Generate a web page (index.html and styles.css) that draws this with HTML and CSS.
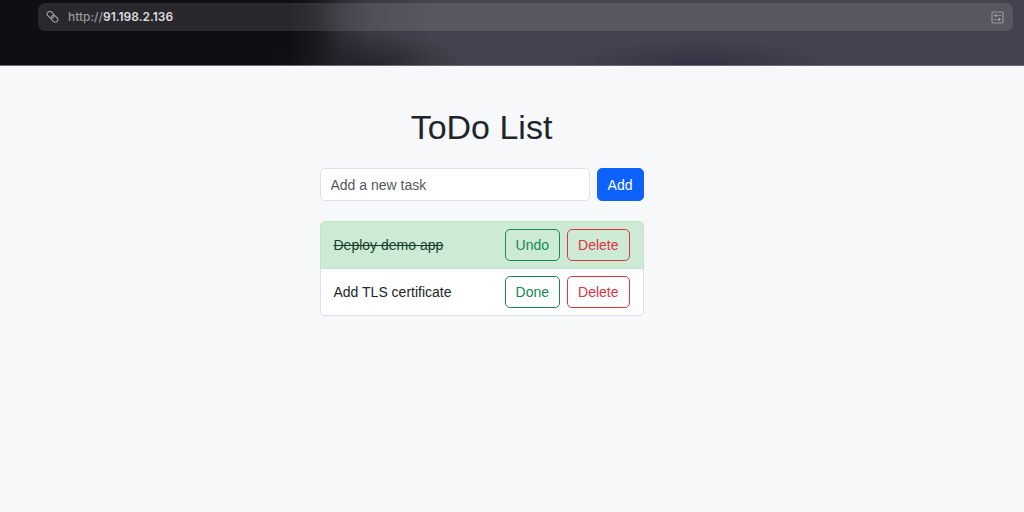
FILE: index.html
```
<!DOCTYPE html>
<html lang="en">
<head>
  <meta charset="UTF-8">
  <meta name="viewport" content="width=device-width, initial-scale=1.0">
  <title>ToDo List</title>
  <link rel="stylesheet" href="styles.css">
</head>
<body>
  <header class="browser-bar">
    <div class="address">
      <svg class="icon-link" viewBox="0 0 14 14" fill="none" stroke="currentColor" stroke-width="1.2">
        <rect x="-3.7" y="-2.6" width="7.4" height="5.2" rx="2.6" transform="translate(4.6 4.8) rotate(45)"/>
        <rect x="-3.7" y="-2.6" width="7.4" height="5.2" rx="2.6" transform="translate(8.4 8.8) rotate(45)"/>
      </svg>
      <span class="url">http://<strong>91.198.2.136</strong></span>
      <svg class="icon-page" viewBox="0 0 13 13" fill="none" stroke="currentColor">
        <rect x="1" y="1" width="11" height="11" rx="1.2" stroke-width="1.2"/>
        <path d="M3 4.5h3.5M7.5 4.5h2.5M3 8.5h2.5M6.5 8.5h3.5"/>
        <path d="M5 3v3M8.2 7v3" stroke-width="1.6"/>
      </svg>
    </div>
  </header>

  <main class="page">
    <div class="container">
      <h1>ToDo List</h1>
      <form class="task-form" onsubmit="return false">
        <input type="text" class="task-input" placeholder="Add a new task" aria-label="Add a new task">
        <button type="submit" class="btn btn-primary">Add</button>
      </form>
      <ul class="task-list">
        <li class="task completed">
          <span class="task-title">Deploy demo app</span>
          <button type="button" class="btn btn-success">Undo</button>
          <button type="button" class="btn btn-danger">Delete</button>
        </li>
        <li class="task">
          <span class="task-title">Add TLS certificate</span>
          <button type="button" class="btn btn-success">Done</button>
          <button type="button" class="btn btn-danger">Delete</button>
        </li>
      </ul>
    </div>
  </main>
</body>
</html>
```
FILE: styles.css
```
* {
  box-sizing: border-box;
}
body {
  margin: 0;
  background-color: #f7f8fa;
  color: #212529;
  font-family: "Liberation Sans", Arial, sans-serif;
  font-size: 14px;
  line-height: 20px;
}

/* Browser toolbar */
.browser-bar {
  height: 66px;
  padding: 3px 11px 0 38px;
  border-bottom: 1px solid #6b6a72;
  background:
    radial-gradient(ellipse 100px 32px at 365px 100%, rgba(28, 26, 34, 0.7), transparent),
    radial-gradient(ellipse 130px 26px at 700px 100%, rgba(46, 44, 62, 0.7), transparent),
    linear-gradient(90deg, #0f0e12 0, #0f0e12 290px, #1a191d 318px, #2d2b34 340px, #3b3944 370px, #44424e 430px, #44424e 100%);
}
.address {
  display: flex;
  align-items: center;
  height: 28px;
  padding: 0 9px 0 8px;
  border-radius: 7px;
  background-color: rgba(255, 255, 255, 0.11);
  color: #98979c;
}
.icon-link {
  width: 14px;
  height: 14px;
}
.url {
  flex: 1;
  margin-left: 8px;
  color: #98979c;
  font-family: Inter, sans-serif;
  font-size: 12px;
  font-weight: 500;
}
.url strong {
  color: #dddde0;
  font-weight: 600;
}
.icon-page {
  width: 13px;
  height: 13px;
}

/* Todo page */
.page {
  padding: 40px 61px 0 0;
}
.container {
  max-width: 324px;
  margin: 0 auto;
}
h1 {
  margin: 0 0 20px;
  font-size: 34px;
  font-weight: 400;
  line-height: 42px;
  text-align: center;
}
.task-form {
  display: flex;
  gap: 7px;
  margin-bottom: 20px;
}
.task-input {
  flex: 1;
  min-width: 0;
  height: 33px;
  padding: 5px 10px;
  border: 1px solid #dee2e6;
  border-radius: 5px;
  background-color: #fff;
  color: #212529;
  font: inherit;
}
.task-input::placeholder {
  color: #54595e;
  opacity: 1;
}
.btn {
  padding: 5px 10px;
  border: 1px solid;
  border-radius: 5px;
  background: none;
  font: inherit;
  cursor: pointer;
}
.btn-primary {
  border-color: #0d62fd;
  background-color: #0d62fd;
  color: #fff;
}
.btn-success {
  border-color: #198754;
  color: #198754;
}
.btn-danger {
  border-color: #dc3545;
  color: #dc3545;
}
.task-list {
  margin: 0;
  padding: 0;
  list-style: none;
}
.task {
  display: flex;
  align-items: center;
  gap: 7px;
  padding: 7px 13px;
  border: 1px solid #dee2e6;
  background-color: #fff;
}
.task + .task {
  border-top: 0;
}
.task:first-child {
  border-radius: 5px 5px 0 0;
}
.task:last-child {
  border-radius: 0 0 5px 5px;
}
.task-title {
  flex: 1;
}
.completed {
  border-color: #c3e3cc;
  background-color: #cdead4;
}
.completed .task-title {
  color: #173f2b;
  text-decoration: line-through;
}
```
